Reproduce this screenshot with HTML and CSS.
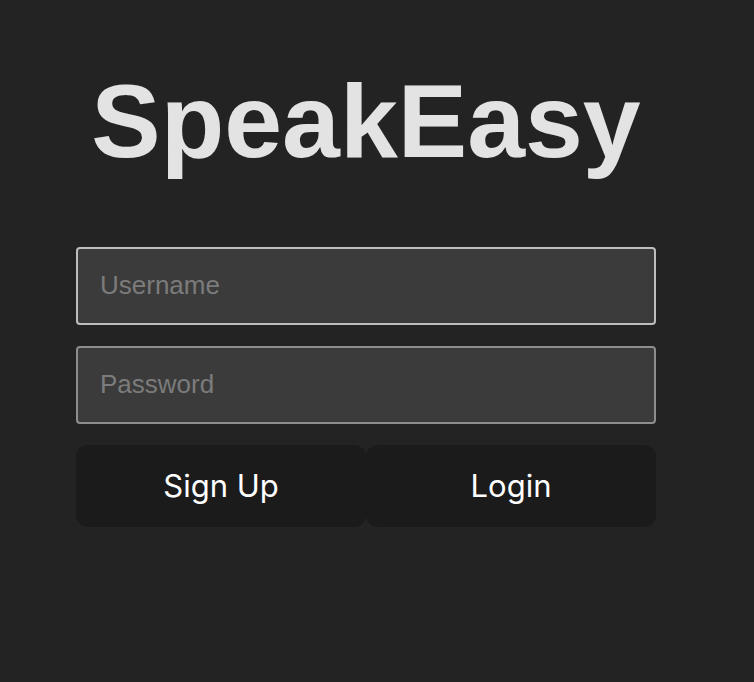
FILE: index.html
```html
<!DOCTYPE html>
<html lang="en">
<head>
<meta charset="utf-8">
<title>SpeakEasy</title>
<link rel="stylesheet" href="styles.css">
</head>
<body>
<main class="login">
  <h1 class="title">SpeakEasy</h1>
  <form class="form">
    <input class="field field-focus" type="text" placeholder="Username">
    <input class="field" type="password" placeholder="Password">
    <div class="actions">
      <button type="button" class="btn">Sign Up</button>
      <button type="button" class="btn">Login</button>
    </div>
  </form>
</main>
</body>
</html>
```

FILE: styles.css
```css
html, body {
  margin: 0;
  padding: 0;
  background: #232323;
  height: 100%;
}

.login {
  width: 580px;
  padding: 62px 0 0 76px;
  display: flex;
  flex-direction: column;
}

.title {
  margin: 0;
  font-family: "Liberation Sans", Arial, sans-serif;
  font-weight: 700;
  font-size: 104px;
  line-height: 1.15;
  color: #e3e3e3;
  text-align: center;
}

.form {
  margin-top: 65px;
  display: flex;
  flex-direction: column;
  gap: 21px;
}

.field {
  box-sizing: border-box;
  width: 580px;
  height: 78px;
  margin: 0;
  padding: 0 22px;
  border: 2px solid #8d8d8d;
  border-radius: 4px;
  background: #3b3b3b;
  font-family: "Liberation Sans", Arial, sans-serif;
  font-size: 26px;
  color: #e0e0e0;
  outline: none;
}

.field-focus {
  border-color: #bdbdbd;
}

.field::placeholder {
  color: #7b7b7b;
}

.actions {
  display: flex;
}

.btn {
  flex: 1;
  height: 82px;
  margin: 0;
  border: none;
  border-radius: 12px;
  background: #1b1b1b;
  color: #ffffff;
  font-family: Inter, "Noto Sans", sans-serif;
  font-weight: 400;
  font-size: 31px;
  cursor: pointer;
}
```
